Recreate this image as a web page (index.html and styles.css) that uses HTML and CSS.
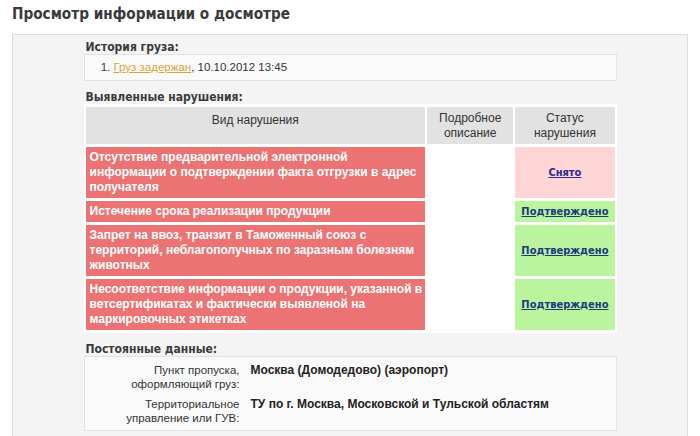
FILE: index.html
```html
<!DOCTYPE html>
<html lang="ru">
<head>
<meta charset="utf-8">
<title>Просмотр информации о досмотре</title>
<link rel="stylesheet" href="styles.css">
</head>
<body>
<h1 class="title">Просмотр информации о досмотре</h1>
<div class="panel">
  <div class="content">
    <div class="section-title">История груза:</div>
    <div class="box history">
      <ol class="history-list">
        <li><a href="#" class="hist-link">Груз задержан</a>, 10.10.2012 13:45</li>
      </ol>
    </div>

    <div class="section-title">Выявленные нарушения:</div>
    <table class="violations">
      <thead>
        <tr>
          <th class="col-kind">Вид нарушения</th>
          <th class="col-desc">Подробное описание</th>
          <th class="col-status">Статус нарушения</th>
        </tr>
      </thead>
      <tbody>
        <tr>
          <td class="kind">Отсутствие предварительной электронной информации о подтверждении факта отгрузки в адрес получателя</td>
          <td class="desc"></td>
          <td class="status removed"><a href="#">Снято</a></td>
        </tr>
        <tr>
          <td class="kind">Истечение срока реализации продукции</td>
          <td class="desc"></td>
          <td class="status confirmed"><a href="#">Подтверждено</a></td>
        </tr>
        <tr>
          <td class="kind">Запрет на ввоз, транзит в Таможенный союз с территорий, неблагополучных по заразным болезням животных</td>
          <td class="desc"></td>
          <td class="status confirmed"><a href="#">Подтверждено</a></td>
        </tr>
        <tr>
          <td class="kind">Несоответствие информации о продукции, указанной в ветсертификатах и фактически выявленой на маркировочных этикетках</td>
          <td class="desc"></td>
          <td class="status confirmed"><a href="#">Подтверждено</a></td>
        </tr>
      </tbody>
    </table>

    <div class="section-title">Постоянные данные:</div>
    <div class="box data">
      <div class="data-row">
        <div class="data-label">Пункт пропуска, оформляющий груз:</div>
        <div class="data-value">Москва (Домодедово) (аэропорт)</div>
      </div>
      <div class="data-row">
        <div class="data-label">Территориальное управление или ГУВ:</div>
        <div class="data-value">ТУ по г. Москва, Московской и Тульской областям</div>
      </div>
    </div>
  </div>
</div>
</body>
</html>
```

FILE: styles.css
```css
html, body {
  margin: 0;
  padding: 0;
  background: #ffffff;
}
body {
  padding: 0 12px;
  font-family: "Liberation Sans", Arial, sans-serif;
  font-size: 12px;
  color: #333333;
}
.title {
  margin: 0;
  padding-top: 4px;
  height: 31px;
  box-sizing: border-box;
  font-family: "DejaVu Sans Condensed", "DejaVu Sans", sans-serif;
  font-stretch: condensed;
  font-size: 15.2px;
  line-height: 20px;
  font-weight: bold;
  color: #3a3a3a;
}
.panel {
  width: 676px;
  box-sizing: border-box;
  border: 1px solid #dddddd;
  background: #f4f4f4;
  padding: 5px 0 12px;
  margin-top: 3px;
}
.content {
  width: 533px;
  margin: 0 auto;
}
.section-title {
  font-family: "DejaVu Sans Condensed", "DejaVu Sans", sans-serif;
  font-stretch: condensed;
  font-weight: bold;
  font-size: 12px;
  line-height: 14px;
  color: #3a3a3a;
  padding-left: 2px;
}
.box {
  background: #fafafa;
  border: 1px solid #e3e3e3;
  margin-bottom: 9px;
}
.history {
  height: 25px;
  display: flex;
  align-items: center;
}
.history-list {
  margin: 0;
  padding: 0 0 0 29px;
  line-height: 15px;
  font-size: 11.5px;
}
.hist-link {
  color: #dba238;
}
.violations {
  width: 533px;
  border-collapse: separate;
  border-spacing: 2px 3px;
  background: #ffffff;
  margin-bottom: 9px;
  table-layout: fixed;
}
.violations th {
  background: #e2e2e2;
  font-weight: normal;
  color: #333333;
  vertical-align: top;
  line-height: 15px;
  padding: 4px 3px 3px;
  text-align: center;
}
.col-kind { width: 333px; padding-top: 6px !important; }
.col-desc { width: 80px; }
.col-status { width: 93px; }
.violations td {
  line-height: 15px;
  padding: 3px 4px 3px 4px;
}
.violations td.kind {
  padding-right: 0;
}
.kind {
  background: #ec7373;
  color: #ffffff;
  font-weight: bold;
  font-size: 12px;
  vertical-align: top;
}
.desc {
  background: #ffffff;
}
.status {
  text-align: center;
  vertical-align: middle;
  font-family: "DejaVu Sans Condensed", "DejaVu Sans", sans-serif;
  font-stretch: condensed;
  font-weight: bold;
  font-size: 11px;
}
.status.removed {
  background: #ffd6d6;
}
.status.removed a {
  color: #2e2a8c;
}
.status.confirmed {
  background: #bbf49e;
}
.status.confirmed a {
  color: #1d3b7c;
}
.data {
  padding: 6px 0 5px;
  margin-bottom: 0;
}
.data-row {
  display: flex;
  gap: 11px;
  margin-bottom: 6px;
}
.data-row:last-child {
  margin-bottom: 0;
}
.data-label {
  width: 155px;
  flex: none;
  text-align: right;
  line-height: 14px;
  font-size: 11.5px;
  color: #333333;
}
.data-value {
  font-weight: bold;
  font-size: 12px;
  line-height: 14px;
  color: #222222;
}
```
